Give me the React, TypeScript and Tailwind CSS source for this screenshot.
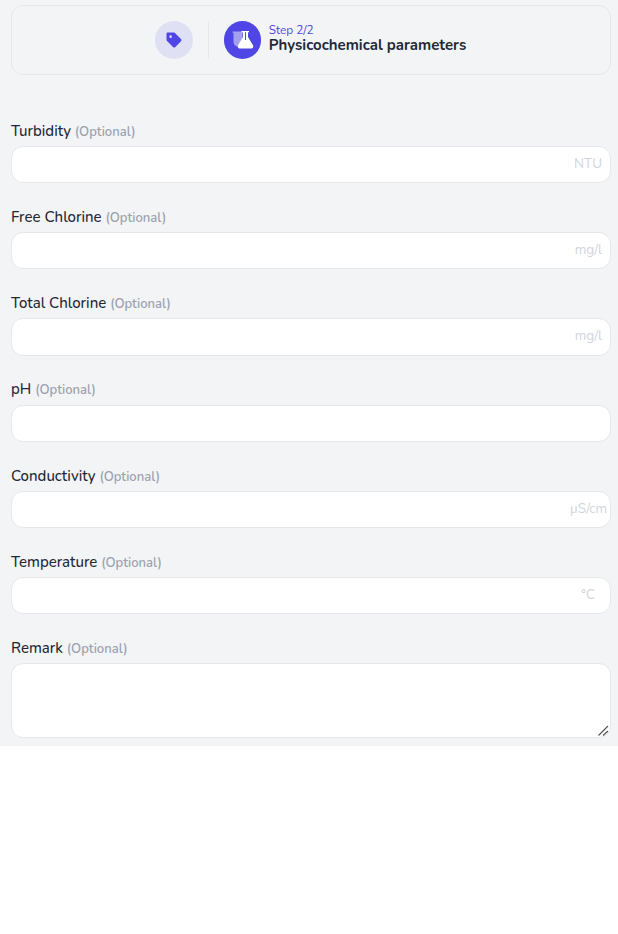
import React from "react";

const fields: { label: string; unit?: string; right?: string }[] = [
  { label: "Turbidity", unit: "NTU", right: "right-[9px]" },
  { label: "Free Chlorine", unit: "mg/l", right: "right-[9px]" },
  { label: "Total Chlorine", unit: "mg/l", right: "right-[9px]" },
  { label: "pH" },
  { label: "Conductivity", unit: "µS/cm", right: "right-1" },
  { label: "Temperature", unit: "°C", right: "right-4" },
];

function Label({ text }: { text: string }) {
  return (
    <label className="block h-[24px] text-[15px] leading-[24px] font-medium text-[#1f2937]">
      {text} <span className="text-[13px] font-semibold text-[#9ca3af]">(Optional)</span>
    </label>
  );
}

export default function App() {
  return (
    <div className="h-[746px] w-[618px] bg-[#f3f4f6] pl-[11px] pr-[7px] pt-[5px] font-['Nunito','Noto_Sans',sans-serif]">
      <div className="flex h-[70px] items-center justify-center rounded-xl border border-[#e5e7eb]">
        <div className="flex h-[38px] w-[38px] items-center justify-center rounded-full bg-[#e0e0f5]">
          <svg width="18" height="18" viewBox="0 0 24 24" fill="#4f46e5">
            <path d="M2 3.500A1.500 1.500 0 0 1 3.500 2h8.200c.6 0 1.200.2 1.600.7l8 8a2.200 2.200 0 0 1 0 3.100l-7.500 7.500a2.200 2.200 0 0 1-3.100 0l-8-8A2.300 2.300 0 0 1 2 11.700zM7.500 9.200A1.700 1.700 0 1 0 7.500 5.800a1.700 1.700 0 0 0 0 3.400z" />
          </svg>
        </div>
        <div className="mx-[15px] h-[38px] w-px bg-[#e5e7eb]" />
        <div className="flex h-[37.5px] w-[37.5px] items-center justify-center rounded-full bg-[#4f46e5]">
          <svg width="22" height="19" viewBox="0 0 22 19" className="mb-px">
            <path d="M0.500 1.500h11v1.200h-1V12a4.500 4.500 0 0 1-9 0V2.700h-1z" fill="#a3a0ec" />
            <path
              fillRule="evenodd"
              d="M9.500 1h7.500v1.300h-1v4.700l5 8.300A2.100 2.100 0 0 1 19.200 18.500H7.800a2.100 2.100 0 0 1-1.800-3.200l5-8.300V2.300H9.500zM13 2.300V10h1V2.300z"
              fill="#ffffff"
            />
          </svg>
        </div>
        <div className="mr-px mb-[2px] ml-[7.5px] flex flex-col">
          <span className="text-[11.75px] leading-[13px] text-[#4f46e5]">Step 2/2</span>
          <span className="text-[15px] leading-[17px] font-bold text-[#1f2937]">Physicochemical parameters</span>
        </div>
      </div>

      <div className="mt-[43.6px] flex flex-col">
        {fields.map((f) => (
          <div key={f.label} className="mb-[21.75px]">
            <Label text={f.label} />
            <div className="relative mt-[3.25px]">
              <input className="block h-[37.25px] w-full rounded-xl border border-[#e5e7eb] bg-white px-3 text-[14px]" />
              {f.unit && (
                <span className={`absolute top-[8px] text-[13.5px] leading-[20px] text-[#d1d5db] ${f.right}`}>{f.unit}</span>
              )}
            </div>
          </div>
        ))}
        <div>
          <Label text="Remark" />
          <div className="relative mt-[3.25px]">
            <textarea className="block h-[75px] w-full resize-none rounded-xl border border-[#e5e7eb] bg-white px-3" />
            <svg className="absolute right-[2px] bottom-[2px]" width="11" height="11" viewBox="0 0 11 11" fill="none" stroke="#555555" strokeWidth="1.200">
              <path d="M0.500 10.500L10 1M5 10.500L10 6" />
            </svg>
          </div>
        </div>
      </div>
    </div>
  );
}
